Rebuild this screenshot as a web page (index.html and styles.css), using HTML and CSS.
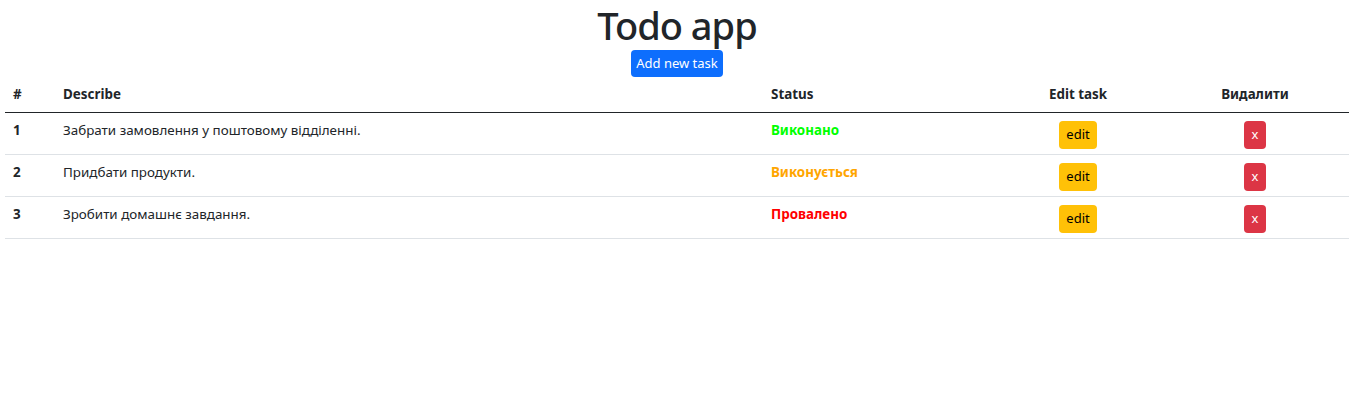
FILE: index.html
```html
<!DOCTYPE html>
<html lang="uk">
<head>
<meta charset="utf-8">
<title>Todo app</title>
<link rel="stylesheet" href="styles.css">
</head>
<body>
<div class="app">
  <header class="app-header">
    <h1 class="title">Todo app</h1>
    <button class="btn btn-primary">Add new task</button>
  </header>
  <table class="tasks">
    <colgroup>
      <col class="c-num"><col class="c-desc"><col class="c-status"><col class="c-edit"><col class="c-del">
    </colgroup>
    <thead>
      <tr>
        <th>#</th>
        <th>Describe</th>
        <th>Status</th>
        <th class="center">Edit task</th>
        <th class="center">Видалити</th>
      </tr>
    </thead>
    <tbody>
      <tr>
        <th>1</th>
        <td>Забрати замовлення у поштовому відділенні.</td>
        <td class="status done">Виконано</td>
        <td class="center"><button class="btn btn-warning">edit</button></td>
        <td class="center"><button class="btn btn-danger">x</button></td>
      </tr>
      <tr>
        <th>2</th>
        <td>Придбати продукти.</td>
        <td class="status progress">Виконується</td>
        <td class="center"><button class="btn btn-warning">edit</button></td>
        <td class="center"><button class="btn btn-danger">x</button></td>
      </tr>
      <tr>
        <th>3</th>
        <td>Зробити домашнє завдання.</td>
        <td class="status failed">Провалено</td>
        <td class="center"><button class="btn btn-warning">edit</button></td>
        <td class="center"><button class="btn btn-danger">x</button></td>
      </tr>
    </tbody>
  </table>
</div>
</body>
</html>
```
FILE: styles.css
```css
* { box-sizing: border-box; }
html, body { margin: 0; padding: 0; background: #fff; }
body {
  font-family: "Noto Sans", "Open Sans", sans-serif;
  font-size: 13.4px;
  line-height: 19.5px;
  color: #212529;
}
.app { padding: 0 11px 0 5px; }
.app-header {
  display: flex;
  flex-direction: column;
  align-items: center;
}
.title {
  margin: 0 0 2px;
  padding-top: 2px;
  font-size: 38px;
  line-height: 46px;
  font-weight: 500;
  letter-spacing: -1px;
}
.btn {
  font-family: inherit;
  font-size: 13px;
  line-height: 19px;
  border: 0;
  border-radius: 4px;
  cursor: pointer;
  padding: 4px 9px;
}
.btn-primary {
  background: #0d6efd;
  color: #fff;
  width: 92px;
  height: 27px;
  padding: 4px 0;
}
.btn-warning {
  background: #ffc107;
  color: #000;
  width: 38px;
  height: 28px;
  padding: 0;
}
.btn-danger {
  background: #dc3545;
  color: #fff;
  width: 22px;
  height: 28px;
  padding: 0;
}
.tasks {
  width: 100%;
  border-collapse: collapse;
  table-layout: fixed;
}
.c-num { width: 50px; }
.c-desc { width: 708px; }
.c-status { width: 232px; }
.c-edit { width: 166px; }
.c-del { width: auto; }
.tasks th, .tasks td {
  text-align: left;
  vertical-align: top;
  padding: 8px 8px 5px;
}
.tasks th { font-weight: 700; }
.tasks thead th {
  padding: 8px 8px 7px;
  border-bottom: 1px solid #212529;
}
.tasks tbody tr { border-bottom: 1px solid #dee2e6; }
.tasks tbody td, .tasks tbody th { height: 41px; }
.tasks .center { text-align: center; }
.status { font-weight: 700; }
.status.done { color: #00ff00; }
.status.progress { color: #ffa500; }
.status.failed { color: #ff0000; }
```
